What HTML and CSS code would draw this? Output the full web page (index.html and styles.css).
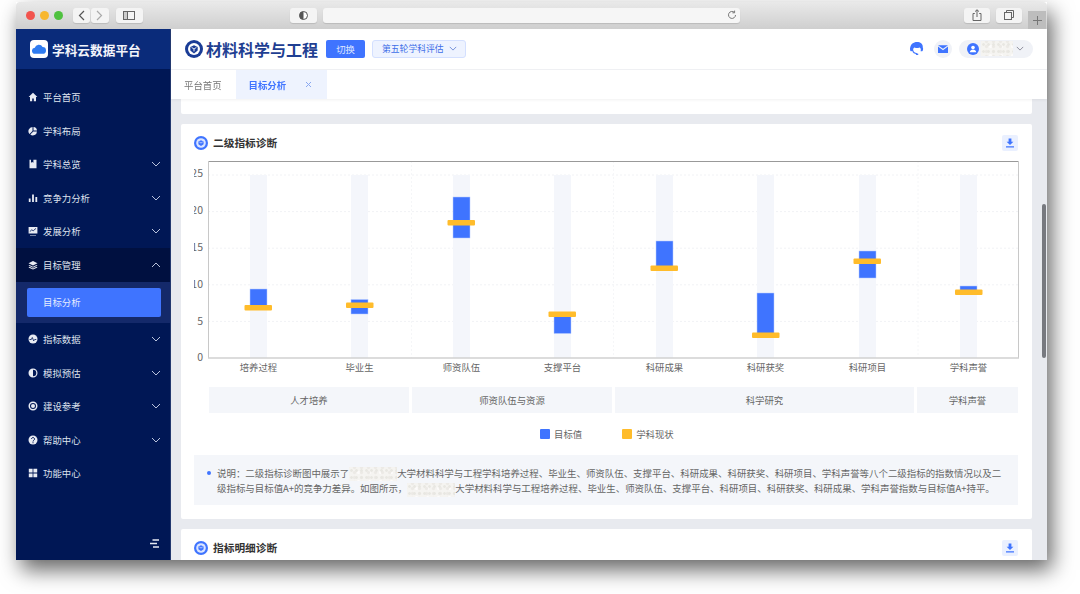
FILE: index.html
```html
<!DOCTYPE html>
<html lang="zh-CN">
<head>
<meta charset="utf-8">
<title>学科云数据平台</title>
<link rel="stylesheet" href="styles.css">
</head>
<body>
<svg class="defs" aria-hidden="true">
  <symbol id="chev" viewBox="0 0 10 6"><path d="M1 1l4 4 4-4" fill="none" stroke="currentColor" stroke-width="1"/></symbol>
  <symbol id="dl" viewBox="0 0 10 10"><path d="M3.600 0.500h2.800v3.200h2L5 7 1.600 3.700h2z M1 8.300h8v1.200H1z" fill="currentColor"/></symbol>
  <symbol id="ring" viewBox="0 0 14 14"><circle cx="7" cy="7" r="7" fill="#3f74ff"/><circle cx="7" cy="7" r="4.800" fill="#dbe5ff"/><path d="M4.400 5.500L7 4.300l2.600 1.200v2.700L7 10 4.400 8.200z" fill="#3f74ff"/><path d="M5.300 6L7 7l1.700-1" fill="none" stroke="#dbe5ff" stroke-width=".7"/></symbol>
</svg>
<div class="window">
  <div class="titlebar">
    <span class="dot red"></span><span class="dot yellow"></span><span class="dot green"></span>
    <span class="tb-btn back"><svg width="7" height="11" viewBox="0 0 7 11"><path d="M6 1L1.500 5.500 6 10" fill="none" stroke="#555" stroke-width="1.200"/></svg></span>
    <span class="tb-btn fwd"><svg width="7" height="11" viewBox="0 0 7 11"><path d="M1 1l4.500 4.500L1 10" fill="none" stroke="#aaa" stroke-width="1.200"/></svg></span>
    <span class="tb-btn side"><svg width="12" height="9" viewBox="0 0 12 9"><rect x=".5" y=".5" width="11" height="8" fill="none" stroke="#666"/><rect x="1" y="1" width="3.500" height="7" fill="#ccc"/><path d="M4.500 1v7" stroke="#666"/></svg></span>
    <span class="tb-btn shield"><svg width="9" height="9" viewBox="0 0 9 9"><circle cx="4.500" cy="4.500" r="4" fill="#fff" stroke="#555"/><path d="M4.500.5a4 4 0 0 0 0 8z" fill="#555"/></svg></span>
    <span class="address"><svg width="10" height="10" viewBox="0 0 10 10"><path d="M8.500 5a3.500 3.500 0 1 1-1.200-2.700" fill="none" stroke="#777"/><path d="M7.600.6v2.200H5.400" fill="none" stroke="#777"/></svg></span>
    <span class="tb-btn share"><svg width="10" height="12" viewBox="0 0 10 12"><path d="M2.800 4.500H1v7h8v-7H7.200M5 8V.8M3 2.600L5 .8l2 1.800" fill="none" stroke="#666"/></svg></span>
    <span class="tb-btn tabs-btn"><svg width="10" height="10" viewBox="0 0 10 10"><rect x=".5" y="2.500" width="7" height="7" fill="none" stroke="#666"/><path d="M2.500 2.500v-2h7v7h-2" fill="none" stroke="#666"/></svg></span>
    <span class="plus"><svg width="9" height="9" viewBox="0 0 9 9"><path d="M4.500 0v9M0 4.500h9" stroke="#777"/></svg></span>
  </div>
  <div class="app">
    <aside class="sidebar">
      <div class="brand">
        <span class="brand-logo"><svg width="14" height="10" viewBox="0 0 14 10"><path d="M3.200 9.800a3 3 0 0 1-.4-6A4.200 4.200 0 0 1 10.600 3a3.400 3.400 0 0 1 0 6.800z" fill="#2f7bf0"/></svg></span>
        <span class="brand-name">学科云数据平台</span>
      </div>
      <nav class="menu">
        <div class="item"><svg class="ico" viewBox="0 0 10 10"><path d="M5 .8L.6 5h1.400v4.200h2.200V6.500h1.600v2.700H8V5h1.400z"/></svg><span>平台首页</span></div>
        <div class="item"><svg class="ico" viewBox="0 0 10 10"><path d="M4.500 1a4.200 4.200 0 0 0-3 7l3-3zM5.500 1v3.500H9A4 4 0 0 0 5.500 1zM5.300 5.500L2.300 8.600A4.200 4.200 0 0 0 9 5.500z"/></svg><span>学科布局</span></div>
        <div class="item"><svg class="ico" viewBox="0 0 10 10"><path d="M1.500.8h7v8.400h-7zM3 .8v3l1.200-.8 1.200.8v-3z" fill-rule="evenodd"/></svg><span>学科总览</span><svg class="chev"><use href="#chev"/></svg></div>
        <div class="item"><svg class="ico" viewBox="0 0 10 10"><path d="M.8 5.500h1.800v3.500H.8zM4.100 1.500h1.800V9H4.100zM7.400 4h1.800v5H7.400z"/></svg><span>竞争力分析</span><svg class="chev"><use href="#chev"/></svg></div>
        <div class="item"><svg class="ico" viewBox="0 0 10 10"><path d="M.6 1h8.800v6.400H.6zM2 9h6v.6H2z"/><path d="M1.800 5.600l2-1.800 1.400 1 2.800-2.400" fill="none" stroke="#001755" stroke-width=".8"/></svg><span>发展分析</span><svg class="chev"><use href="#chev"/></svg></div>
        <div class="item open"><svg class="ico" viewBox="0 0 10 10"><path d="M5 1l4.500 2.200L5 5.400.5 3.200zM1.500 5L5 6.700 8.500 5l1 .6L5 7.800.5 5.600zM1.500 6.800L5 8.500l3.500-1.700 1 .6L5 9.600.5 7.400z"/></svg><span>目标管理</span><svg class="chev up"><use href="#chev"/></svg></div>
        <div class="sub"><div class="sub-item">目标分析</div></div>
        <div class="item"><svg class="ico" viewBox="0 0 10 10"><path d="M5 .5a4.500 4.500 0 1 0 0 9 4.500 4.500 0 0 0 0-9z"/><path d="M1.500 5.500h1.800l1-2 1.400 3.400 1-1.400h1.600" fill="none" stroke="#001755" stroke-width=".8"/></svg><span>指标数据</span><svg class="chev"><use href="#chev"/></svg></div>
        <div class="item"><svg class="ico" viewBox="0 0 10 10"><path d="M5 .5a4.500 4.500 0 1 0 0 9 4.500 4.500 0 0 0 0-9zm0 1.200v6.600a3.300 3.300 0 0 0 0-6.600z" fill-rule="evenodd"/></svg><span>模拟预估</span><svg class="chev"><use href="#chev"/></svg></div>
        <div class="item"><svg class="ico" viewBox="0 0 10 10"><path d="M5 .5a4.500 4.500 0 1 0 0 9 4.500 4.500 0 0 0 0-9zm0 1.500a3 3 0 1 1 0 6 3 3 0 0 1 0-6z" fill-rule="evenodd"/><circle cx="5" cy="5" r="2"/></svg><span>建设参考</span><svg class="chev"><use href="#chev"/></svg></div>
        <div class="item"><svg class="ico" viewBox="0 0 10 10"><circle cx="5" cy="5" r="4.500"/><path d="M3.500 4a1.500 1.500 0 1 1 2.300 1.300C5.200 5.700 5 6 5 6.500" fill="none" stroke="#001755"/><path d="M4.500 7.200h1v1h-1z" fill="#001755"/></svg><span>帮助中心</span><svg class="chev"><use href="#chev"/></svg></div>
        <div class="item"><svg class="ico" viewBox="0 0 10 10"><path d="M.8.800h3.800v3.800H.8zM5.400.800h3.800v3.800H5.400zM.8 5.400h3.800v3.800H.8zM5.400 5.400h3.800v3.800H5.400z"/></svg><span>功能中心</span></div>
      </nav>
      <div class="collapse"><svg width="9" height="9" viewBox="0 0 9 9"><path d="M2.500 1H9M0 4.500h7M3 8h6" stroke="#e6e9f2" stroke-width="1.500"/></svg></div>
    </aside>
    <main class="main">
      <header class="header">
        <svg class="subject-ico" viewBox="0 0 18 18"><circle cx="9" cy="9" r="9" fill="#1a3c96"/><circle cx="9" cy="9" r="6" fill="#fff"/><path d="M5.300 6.900L9 5.200l3.700 1.700v3.700L9 13.400l-3.700-2.800z" fill="#1a3c96"/><path d="M6.600 7.400L9 9l2.400-1.600M9 9v2.400" fill="none" stroke="#fff" stroke-width=".9"/></svg>
        <h1 class="subject">材料科学与工程</h1>
        <button class="switch">切换</button>
        <div class="round-select"><span>第五轮学科评估</span><svg class="sel-chev"><use href="#chev"/></svg></div>
        <div class="spacer"></div>
        <svg class="headset" viewBox="0 0 14 14"><path d="M7 0C3.200 0 .8 2.400.3 5.200c-.5.500-.3 2.900 0 3.500.4.600 1.400.6 2 .4.500 1.700 1.800 3 4.700 3.100v-1C5 11.100 3.500 10 3.200 8.100 3 6.900 3.600 5.900 4.600 5.500c1.500.8 3.400.8 4.800 0 1 .4 1.600 1.400 1.400 2.600l-.2 1.100c.7.200 1.900.1 2.100-.5.500-.6.600-2.900 0-3.500C13.200 2.400 10.800 0 7 0z" fill="#3f74ff"/><rect x="5.800" y="11.400" width="2.600" height="1.600" rx=".8" fill="#3f74ff"/></svg>
        <span class="mail"><svg width="10" height="8" viewBox="0 0 10 8"><path d="M0 .2h10L5 3.800zM0 1.600L5 5.200l5-3.600V8H0z" fill="#3f74ff"/></svg></span>
        <div class="user">
          <svg width="12" height="12" viewBox="0 0 12 12"><circle cx="6" cy="6" r="6" fill="#3f74ff"/><circle cx="6" cy="4.600" r="1.800" fill="#fff"/><path d="M2.800 9.200c.3-1.800 1.600-2.400 3.200-2.400s2.900.6 3.200 2.400z" fill="#fff"/></svg>
          <span class="redact user-name"></span>
          <svg class="user-chev"><use href="#chev"/></svg>
        </div>
      </header>
      <div class="tabs">
        <span class="tab">平台首页</span>
        <span class="tab active">目标分析<svg width="7" height="7" viewBox="0 0 7 7"><path d="M1 1l5 5M6 1L1 6" stroke="#8aa8f0"/></svg></span>
      </div>
      <div class="content">
        <section class="card stub"></section>
        <section class="card diag">
          <div class="card-head">
            <svg class="ring"><use href="#ring"/></svg>
            <h2>二级指标诊断</h2>
            <span class="dl-btn"><svg><use href="#dl"/></svg></span>
          </div>
          <svg class="chart" viewBox="194 161 825 218" width="825" height="218">
            <path class="grid-h" d="M208 175H1018M208 211.600H1018M208 248.200H1018M208 284.800H1018M208 321.400H1018"/>
            <path class="grid-v" d="M411.500 161V358M613.500 161V358M918 161V358"/>
            <g class="bands">
              <rect x="250" y="175" width="17" height="183"/><rect x="351" y="175" width="17" height="183"/>
              <rect x="453" y="175" width="17" height="183"/><rect x="554" y="175" width="17" height="183"/>
              <rect x="656" y="175" width="17" height="183"/><rect x="757" y="175" width="17" height="183"/>
              <rect x="859" y="175" width="17" height="183"/><rect x="960" y="175" width="17" height="183"/>
            </g>
            <path class="frame-top" d="M208 161.500H1018"/>
            <path class="frame-side" d="M208.500 161V358M1018.500 161V358"/>
            <path class="frame-bottom" d="M208 358H1019"/>
            <g class="bars">
              <rect x="250" y="289" width="17" height="18"/><rect x="351" y="299.500" width="17" height="14.500"/>
              <rect x="453" y="197" width="17" height="41"/><rect x="554" y="314" width="17" height="19.500"/>
              <rect x="656" y="241" width="17" height="27"/><rect x="757" y="293" width="17" height="42"/>
              <rect x="859" y="251" width="17" height="27"/><rect x="960" y="286" width="17" height="6"/>
            </g>
            <g class="marks">
              <rect x="244.500" y="305" width="27.500" height="5.500" rx="1"/><rect x="346" y="302.500" width="27.500" height="5.500" rx="1"/>
              <rect x="447.500" y="220" width="27.500" height="5.500" rx="1"/><rect x="548.500" y="311.500" width="27.500" height="5.500" rx="1"/>
              <rect x="650.500" y="265.500" width="27.500" height="5.500" rx="1"/><rect x="752" y="332.500" width="27.500" height="5.500" rx="1"/>
              <rect x="853.500" y="258.500" width="27.500" height="5.500" rx="1"/><rect x="955" y="289.500" width="27.500" height="5.500" rx="1"/>
            </g>
            <g class="ylab">
              <text x="203" y="177">25</text><text x="203" y="214">20</text><text x="203" y="251">15</text>
              <text x="203" y="288">10</text><text x="203" y="325">5</text><text x="203" y="361">0</text>
            </g>
            <g class="xlab">
              <text x="258.500" y="371">培养过程</text><text x="359.500" y="371">毕业生</text><text x="461.500" y="371">师资队伍</text>
              <text x="562.500" y="371">支撑平台</text><text x="664.500" y="371">科研成果</text><text x="765.500" y="371">科研获奖</text>
              <text x="867.500" y="371">科研项目</text><text x="968.500" y="371">学科声誉</text>
            </g>
          </svg>
          <div class="strip">
            <span>人才培养</span><span>师资队伍与资源</span><span>科学研究</span><span>学科声誉</span>
          </div>
          <div class="legend">
            <span class="lg"><i class="sw blue"></i>目标值</span>
            <span class="lg"><i class="sw gold"></i>学科现状</span>
          </div>
          <div class="note">
            <i class="bullet"></i>
            <p>说明：二级指标诊断图中展示了<span class="redact p-name"></span>大学材料科学与工程学科培养过程、毕业生、师资队伍、支撑平台、科研成果、科研获奖、科研项目、学科声誉等八个二级指标的指数情况以及二<br>级指标与目标值A+的竞争力差异。如图所示，<span class="redact p-name"></span>大学材料科学与工程培养过程、毕业生、师资队伍、支撑平台、科研项目、科研获奖、科研成果、学科声誉指数与目标值A+持平。</p>
          </div>
        </section>
        <section class="card detail">
          <div class="card-head">
            <svg class="ring"><use href="#ring"/></svg>
            <h2>指标明细诊断</h2>
            <span class="dl-btn"><svg><use href="#dl"/></svg></span>
          </div>
        </section>
      </div>
      <div class="thumb"></div>
    </main>
  </div>
</div>
</body>
</html>
```
FILE: styles.css
```css
* { box-sizing: border-box; }
html, body { margin: 0; height: 100%; background: #fff; overflow: hidden; }
body { padding: 2px 33px 0 16px; font-family: "Noto Sans CJK SC", "Noto Sans", sans-serif; font-size: 9.400px; color: #666; }
.defs { display: none; }
svg { display: block; flex: none; }

.window { width: 1031px; height: 558px; display: flex; flex-direction: column; box-shadow: 5px 10px 20px rgba(0,0,0,.6); filter: blur(.4px); }

.titlebar { height: 27px; flex: none; display: flex; align-items: center; padding: 0 0 1px 9.500px; background: linear-gradient(#e9e9e9, #cfcfcf); border-radius: 4px 4px 0 0; position: relative; }
.dot { width: 9px; height: 9px; border-radius: 50%; margin-right: 5px; }
.red { background: #f2544e; }
.yellow { background: #f7b730; }
.green { background: #4fc13f; }
.tb-btn { height: 15px; background: #f4f4f4; border-radius: 3px; display: flex; align-items: center; justify-content: center; box-shadow: 0 1px 1px rgba(0,0,0,.12); }
.back { width: 17px; margin-left: 5px; }
.fwd { width: 18px; margin-left: 1px; }
.side { width: 27px; margin-left: 7px; }
.shield { width: 27px; margin-left: 147px; }
.address { width: 417px; height: 15px; margin-left: 6px; background: #f6f6f6; border-radius: 3px; display: flex; align-items: center; justify-content: flex-end; padding-right: 3px; box-shadow: 0 1px 1px rgba(0,0,0,.12); }
.share { width: 26px; margin-left: 224px; }
.tabs-btn { width: 26px; margin-left: 6px; }
.plus { position: absolute; right: 1px; bottom: 0; width: 18px; height: 18px; background: #bdbdbd; display: flex; align-items: center; justify-content: center; }

.app { flex: 1; min-height: 0; display: flex; }

.sidebar { width: 155px; flex: none; background: #001755; display: flex; flex-direction: column; border-right: 1px solid #23396f; }
.brand { height: 40px; flex: none; display: flex; align-items: center; gap: 4px; padding-left: 14px; background: #0a2b7a; }
.brand-logo { width: 18px; height: 18px; background: #fff; border-radius: 4px; display: flex; align-items: center; justify-content: center; }
.brand-name { font-size: 12.700px; font-weight: 700; color: #f2f4fa; }
.menu { flex: 1; padding-top: 11.500px; }
.item { height: 33.500px; display: flex; align-items: center; gap: 5px; padding: 0 9px 0 12px; color: #dfe3ee; }
.item.open { background: #001040; }
.ico { width: 10px; height: 10px; fill: #e8ebf3; }
.chev { width: 10px; height: 6px; margin-left: auto; color: #b8c2dc; }
.chev.up { transform: rotate(180deg); }
.sub { height: 41px; padding: 6px 9px 6px 11px; background: #14296a; }
.sub-item { height: 29px; background: #3f74ff; border-radius: 2px; color: #e6ecff; display: flex; align-items: center; padding-left: 16px; }
.collapse { height: 32px; flex: none; padding: 11px 11px 0 0; display: flex; justify-content: flex-end; align-items: flex-start; }

.main { flex: 1; min-width: 0; display: flex; flex-direction: column; position: relative; background: #e8eaef; }
.header { height: 41px; flex: none; background: #fff; border-bottom: 1px solid #f1f2f5; display: flex; align-items: center; padding: 0 14px 1px 14px; }
.subject-ico { width: 18px; height: 18px; margin-right: 3px; }
.subject { margin: 0; font-size: 16px; font-weight: 700; color: #1f3f92; line-height: 1; }
.switch { margin: 0 0 0 8px; width: 39px; height: 18px; border: 0; padding: 0; background: #3f74ff; color: #dfe8ff; font: inherit; border-radius: 2px; }
.round-select { margin-left: 7px; width: 94px; height: 18px; background: #eef3ff; border: 1px solid #d4e0ff; border-radius: 3px; display: flex; align-items: center; padding-left: 9px; color: #3f6fe8; font-size: 8.800px; }
.sel-chev { width: 8px; height: 5px; margin-left: 5px; color: #5b7bd0; }
.spacer { flex: 1; }
.headset { width: 14px; height: 14px; }
.mail { width: 18px; height: 18px; margin-left: 10px; border-radius: 50%; background: #f0f2f7; display: flex; align-items: center; justify-content: center; }
.user { margin-left: 7px; width: 74px; height: 18px; border-radius: 9px; background: #f0f2f7; display: flex; align-items: center; padding-left: 8px; }
.user-name { width: 32px; height: 15px; margin-left: 2px; }
.user-chev { width: 8px; height: 5px; margin-left: 3px; color: #778; }

.redact { display: inline-block; vertical-align: middle; background-color: #f5f4f1; background-image: radial-gradient(circle, #e8e7e2 .9px, transparent 1.800px), radial-gradient(circle, #eceae6 1.200px, transparent 2.200px), radial-gradient(circle, #fcfbfa 1px, transparent 2px); background-size: 5px 7px, 7px 5px, 11px 9px; background-position: 0 0, 2px 3px, 4px 1px; }

.tabs { height: 29px; flex: none; background: #fff; display: flex; align-items: stretch; padding: 0 0 0 13px; box-shadow: 0 1px 3px rgba(0,0,0,.06); position: relative; z-index: 1; }
.tab { display: flex; align-items: center; color: #777; }
.tab.active { margin-left: 14px; width: 91px; padding: 0 15px 0 13px; justify-content: space-between; background: #eef3fe; color: #3f74ff; font-weight: 700; }

.content { flex: 1; min-height: 0; overflow: hidden; padding: 0 15px 0 10px; display: flex; flex-direction: column; gap: 10px; }
.card { background: #fff; border-radius: 2px; flex: none; }
.stub { height: 15px; border-radius: 0 0 2px 2px; }
.diag { height: 395px; padding: 0 14px 0 13px; }
.detail { height: 100px; padding: 0 14px 0 13px; }
.card-head { height: 37px; display: flex; align-items: center; gap: 5px; }
.ring { width: 14px; height: 14px; }
.card-head h2 { margin: 0 0 1px; font-size: 10.700px; font-weight: 700; color: #333; }
.dl-btn { margin-left: auto; width: 16px; height: 16px; border-radius: 2px; background: #eaf0ff; display: flex; align-items: center; justify-content: center; color: #3f74ff; }
.dl-btn svg { width: 10px; height: 10px; }

.chart { overflow: hidden; }
.grid-h { fill: none; stroke: #f1f2f5; stroke-width: 1; stroke-dasharray: 2 2; }
.grid-v { fill: none; stroke: #f5f6f8; stroke-width: 1; stroke-dasharray: 2 2; }
.bands rect { fill: #f4f6fb; }
.frame-top { stroke: #999; stroke-width: 1; fill: none; }
.frame-side { stroke: #c8c8c8; stroke-width: 1; fill: none; }
.frame-bottom { stroke: #d0d0d0; stroke-width: 1.500; fill: none; }
.bars rect { fill: #3f74ff; stroke: #b7cbff; stroke-width: .5; }
.marks rect { fill: #ffbc2b; }
.ylab text { font-size: 10.500px; fill: #666; text-anchor: end; }
.xlab text { font-size: 9.400px; fill: #666; text-anchor: middle; }

.strip { margin: 8px 0 0 15px; display: grid; grid-template-columns: 200px 200px 299px 101px; gap: 3px; height: 26px; }
.strip span { background: #f4f6fa; display: flex; align-items: center; justify-content: center; color: #666; }

.legend { height: 42px; display: flex; align-items: center; gap: 40px; padding: 0 0 0 346px; }
.lg { display: flex; align-items: center; gap: 4px; color: #666; }
.sw { width: 10px; height: 10px; border-radius: 1px; }
.blue { background: #3f74ff; }
.gold { background: #ffbc2b; }

.note { height: 50px; background: #f4f6fa; display: flex; padding: 11px 0 0 13px; position: relative; }
.bullet { width: 4px; height: 4px; border-radius: 50%; background: #3f74ff; margin: 5px 6px 0 0; flex: none; }
.note p { margin: 0; line-height: 14px; font-size: 9.450px; color: #666; white-space: nowrap; }
.p-name { width: 48px; height: 14px; }

.thumb { position: absolute; right: 1px; top: 175px; width: 4px; height: 154px; border-radius: 2px; background: #77797f; }
```
